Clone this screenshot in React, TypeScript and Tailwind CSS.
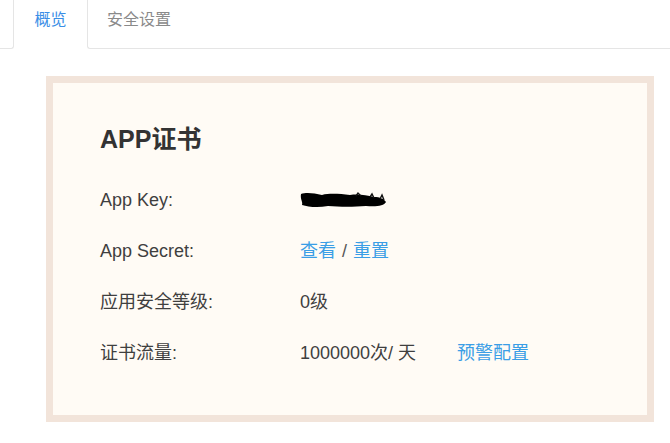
import React from "react";

const FONT = { fontFamily: '"Liberation Sans", "Noto Sans CJK SC", sans-serif' };

// redaction scribble over the app key
const Redacted = () => (
  <svg width="88" height="18" viewBox="0 0 88 18" className="block">
    <path
      d="M1 3 C 6 1, 14 2, 22 4 C 30 2, 40 3, 50 4 C 58 3, 66 4, 74 6 C 80 6, 84 8, 86 11 C 84 15, 76 16, 66 15 C 54 16, 40 16, 28 15 C 18 17, 8 16, 2 14 C 3 11, 0 8, 1 3 Z"
      fill="#000"
    />
    <path d="M56 5 L58 2 L61 5 M70 6 L72 3 L74 7 M80 8 L82 4 L84 9" stroke="#111" strokeWidth="1.4" fill="none" />
  </svg>
);

const Row = ({ label, children }: { label: string; children: React.ReactNode }) => (
  <div className="flex h-[51px] items-center text-[18px] leading-[24px]">
    <div className="w-[200px] text-[#3f3f3f]">{label}</div>
    <div className="flex items-center text-[#3f3f3f]">{children}</div>
  </div>
);

export default function App() {
  return (
    <div className="h-[443px] w-[670px] overflow-hidden bg-white" style={FONT}>
      {/* Tabs */}
      <div className="flex h-[49px]">
        <div className="w-[14px] rounded-br-[3px] border-b border-r border-[#e5e5e5]" />
        <div className="flex w-[73px] items-start justify-center pt-[9px] text-[16px] leading-[22px] text-[#3a8ee6]">
          概览
        </div>
        <div className="flex-1 rounded-bl-[3px] border-b border-l border-[#e5e5e5] pl-[19px] pt-[9px] text-[16px] leading-[22px] text-[#8a8a8a]">
          安全设置
        </div>
      </div>

      {/* Card */}
      <div className="ml-[46px] mt-[27px] w-[608px] border-[7px] border-[#f2e4da] bg-[#fffbf5] pb-[37px] pl-[47px] pt-[38px]">
        <div className="h-[36px] text-[25px] font-bold leading-[36px] text-[#333]">APP证书</div>
        <div className="mt-[17px]">
          <Row label="App Key:">
            <Redacted />
          </Row>
          <Row label="App Secret:">
            <span className="cursor-pointer text-[#3a9ee6]">查看</span>
            <span className="mx-[6px] text-[#555]">/</span>
            <span className="cursor-pointer text-[#3a9ee6]">重置</span>
          </Row>
          <Row label="应用安全等级:">0级</Row>
          <Row label="证书流量:">
            <span>1000000次/ 天</span>
            <span className="ml-[41px] cursor-pointer text-[#3a9ee6]">预警配置</span>
          </Row>
        </div>
      </div>
    </div>
  );
}
